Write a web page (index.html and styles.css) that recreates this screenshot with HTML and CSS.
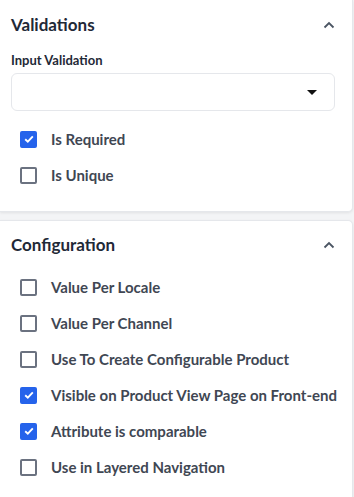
FILE: index.html
```html
<!DOCTYPE html>
<html lang="en">
<head>
    <meta charset="UTF-8">
    <meta name="viewport" content="width=device-width, initial-scale=1.0">
    <title>Attribute settings</title>
    <link rel="stylesheet" href="styles.css">
</head>
<body>

    <section class="card card-first">
        <div class="card-head">
            <h2>Validations</h2>
            <svg class="chevron" width="12" height="8" viewBox="0 0 12 8"><path d="M1.5 6.5 L6 2 L10.5 6.5" fill="none" stroke="#4b5563" stroke-width="1.8"/></svg>
        </div>

        <label class="field-label">Input Validation</label>
        <div class="select">
            <span class="caret"></span>
        </div>

        <div class="checks checks-validations">
            <label class="check"><span class="box checked"><svg width="10" height="8" viewBox="0 0 10 8"><path d="M1.2 4.2 L3.8 6.6 L8.8 1.4" fill="none" stroke="#fff" stroke-width="1.9"/></svg></span>Is Required</label>
            <label class="check"><span class="box"></span>Is Unique</label>
        </div>
    </section>

    <section class="card">
        <div class="card-head">
            <h2>Configuration</h2>
            <svg class="chevron" width="12" height="8" viewBox="0 0 12 8"><path d="M1.5 6.5 L6 2 L10.5 6.5" fill="none" stroke="#4b5563" stroke-width="1.8"/></svg>
        </div>

        <div class="checks checks-config">
            <label class="check"><span class="box"></span>Value Per Locale</label>
            <label class="check"><span class="box"></span>Value Per Channel</label>
            <label class="check"><span class="box"></span>Use To Create Configurable Product</label>
            <label class="check"><span class="box checked"><svg width="10" height="8" viewBox="0 0 10 8"><path d="M1.2 4.2 L3.8 6.6 L8.8 1.4" fill="none" stroke="#fff" stroke-width="1.9"/></svg></span>Visible on Product View Page on Front-end</label>
            <label class="check"><span class="box checked"><svg width="10" height="8" viewBox="0 0 10 8"><path d="M1.2 4.2 L3.8 6.6 L8.8 1.4" fill="none" stroke="#fff" stroke-width="1.9"/></svg></span>Attribute is comparable</label>
            <label class="check"><span class="box"></span>Use in Layered Navigation</label>
        </div>
    </section>

</body>
</html>
```

FILE: styles.css
```css
:root {
    --page-bg: #f3f4f6;
    --card-bg: #fff;
    --border-color: #e5e7eb;
    --title-color: #1f2937;
    --text-color: #3f4753;
    --primary-color: #2563eb;
}
body {
    font-family: Lato, "Open Sans", sans-serif;
    background-color: var(--page-bg);
    margin: 0;
    padding: 0;
}
.card {
    background-color: var(--card-bg);
    border: 1px solid var(--border-color);
    border-left: none;
    border-radius: 0 5px 5px 0;
    box-shadow: 0 1px 3px rgba(0,0,0,0.08);
    margin-right: 1px;
    padding: 11px 17px 16px 11px;
    display: flex;
    flex-direction: column;
}
.card-first {
    border-top: none;
    border-radius: 0 0 5px 0;
    padding-top: 12px;
    padding-bottom: 18px;
    margin-bottom: 8px;
}
.card-head {
    display: flex;
    align-items: center;
    justify-content: space-between;
    height: 24px;
}
h2 {
    margin: 0;
    font-size: 17px;
    font-weight: 700;
    color: var(--title-color);
}
.chevron {
    margin-top: 1px;
}
.field-label {
    margin-top: 16px;
    font-size: 13px;
    line-height: 16px;
    font-weight: 700;
    color: var(--title-color);
}
.select {
    margin-top: 5px;
    height: 36px;
    border: 1px solid var(--border-color);
    border-radius: 6px;
    display: flex;
    align-items: center;
    justify-content: flex-end;
    padding-right: 17px;
}
.caret {
    width: 0;
    height: 0;
    border-left: 5px solid transparent;
    border-right: 5px solid transparent;
    border-top: 5px solid #111;
    margin-top: 1px;
}
.checks {
    display: flex;
    flex-direction: column;
    padding-left: 9px;
}
.checks-validations {
    margin-top: 10px;
}
.checks-config {
    margin-top: 13px;
}
.check {
    display: flex;
    align-items: center;
    gap: 14px;
    height: 36px;
    font-size: 15px;
    font-weight: 700;
    color: var(--text-color);
    white-space: nowrap;
}
.box {
    box-sizing: border-box;
    width: 17px;
    height: 17px;
    border: 2px solid #6b7280;
    border-radius: 2px;
    display: flex;
    align-items: center;
    justify-content: center;
    flex-shrink: 0;
}
.box.checked {
    background-color: var(--primary-color);
    border-color: var(--primary-color);
}
```
